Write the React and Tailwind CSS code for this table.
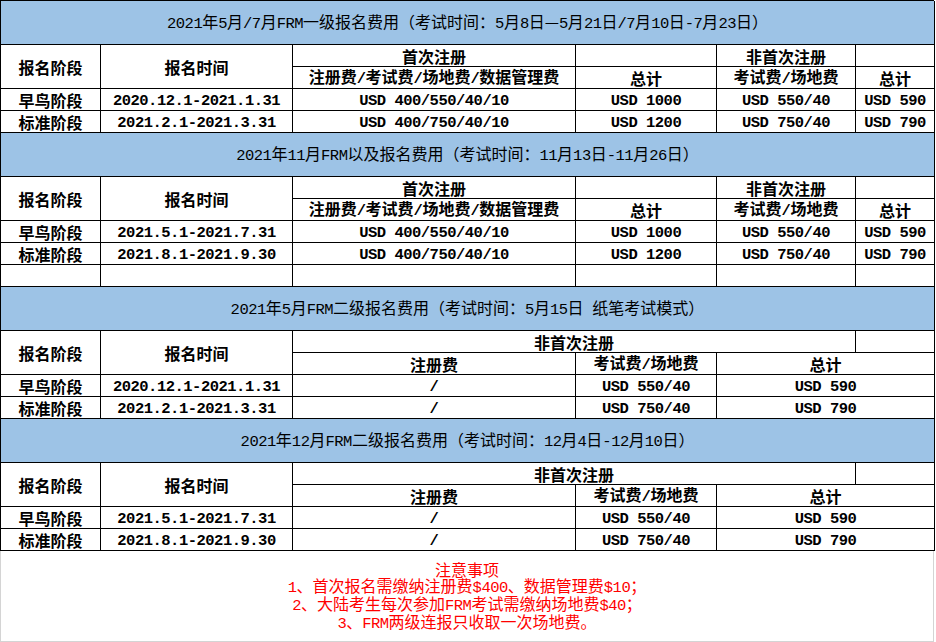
import React from "react";

function T({ children }) {
  const parts = String(children).split(/([\x00-\x7F]+)/);
  return (
    <span className="whitespace-pre">
      {parts.map((p, i) =>
        /^[\x00-\x7F]+$/.test(p) ? (
          <span key={i} className="font-['Liberation_Mono',monospace] text-[15.5px] tracking-[-0.5px]">
            {p}
          </span>
        ) : (
          <span key={i}>{p}</span>
        )
      )}
    </span>
  );
}

function C({ className = "", children }) {
  return (
    <div className={`flex items-center justify-center border-r border-b border-black leading-none whitespace-nowrap ${className}`}>
      {children != null ? <T>{children}</T> : null}
    </div>
  );
}

function Title({ children }) {
  return <C className="col-span-6 row-span-2 bg-[#9dc3e6] font-normal">{children}</C>;
}

function Level1({ title, rows, extra }) {
  return (
    <>
      <Title>{title}</Title>
      <C className="row-span-2">报名阶段</C>
      <C className="row-span-2">报名时间</C>
      <C>首次注册</C>
      <C />
      <C>非首次注册</C>
      <C />
      <C>注册费/考试费/场地费/数据管理费</C>
      <C>总计</C>
      <C>考试费/场地费</C>
      <C>总计</C>
      {rows.map((r, i) => (
        <React.Fragment key={i}>
          <C>{r[0]}</C>
          <C>{r[1]}</C>
          <C>{r[2]}</C>
          <C>{r[3]}</C>
          <C>{r[4]}</C>
          <C>{r[5]}</C>
        </React.Fragment>
      ))}
      {extra && (
        <>
          <C />
          <C />
          <C />
          <C />
          <C />
          <C />
        </>
      )}
    </>
  );
}

function Level2({ title, rows }) {
  return (
    <>
      <Title>{title}</Title>
      <C className="row-span-2">报名阶段</C>
      <C className="row-span-2">报名时间</C>
      <C className="col-span-3">非首次注册</C>
      <C />
      <C>注册费</C>
      <C>考试费/场地费</C>
      <C className="col-span-2">总计</C>
      {rows.map((r, i) => (
        <React.Fragment key={i}>
          <C>{r[0]}</C>
          <C>{r[1]}</C>
          <C>/</C>
          <C>{r[2]}</C>
          <C className="col-span-2">{r[3]}</C>
        </React.Fragment>
      ))}
    </>
  );
}

function Note({ children }) {
  return (
    <div className="h-[18px] flex items-center leading-none whitespace-nowrap">
      <T>{children}</T>
    </div>
  );
}

export default function App() {
  return (
    <div className="w-[936px] h-[642px] bg-white text-black text-[16px] font-bold font-['Noto_Sans_CJK_SC',sans-serif]">
      <div className="w-[934px] grid grid-cols-[100px_192px_283px_141px_139px_79px] auto-rows-[22px] border-l border-t border-black">
        <Level1
          title="2021年5月/7月FRM一级报名费用（考试时间：5月8日—5月21日/7月10日-7月23日）"
          rows={[
            ["早鸟阶段", "2020.12.1-2021.1.31", "USD 400/550/40/10", "USD 1000", "USD 550/40", "USD 590"],
            ["标准阶段", "2021.2.1-2021.3.31", "USD 400/750/40/10", "USD 1200", "USD 750/40", "USD 790"],
          ]}
        />
        <Level1
          title="2021年11月FRM以及报名费用（考试时间：11月13日-11月26日）"
          rows={[
            ["早鸟阶段", "2021.5.1-2021.7.31", "USD 400/550/40/10", "USD 1000", "USD 550/40", "USD 590"],
            ["标准阶段", "2021.8.1-2021.9.30", "USD 400/750/40/10", "USD 1200", "USD 750/40", "USD 790"],
          ]}
          extra
        />
        <Level2
          title="2021年5月FRM二级报名费用（考试时间：5月15日 纸笔考试模式）"
          rows={[
            ["早鸟阶段", "2020.12.1-2021.1.31", "USD 550/40", "USD 590"],
            ["标准阶段", "2021.2.1-2021.3.31", "USD 750/40", "USD 790"],
          ]}
        />
        <Level2
          title="2021年12月FRM二级报名费用（考试时间：12月4日-12月10日）"
          rows={[
            ["早鸟阶段", "2021.5.1-2021.7.31", "USD 550/40", "USD 590"],
            ["标准阶段", "2021.8.1-2021.9.30", "USD 750/40", "USD 790"],
          ]}
        />
      </div>
      <div className="w-[934px] h-[91px] border-x border-b border-[#d4d4d4] flex flex-col items-center pt-[9px] text-[#ff0000] font-normal">
        <Note>注意事项</Note>
        <Note>1、首次报名需缴纳注册费$400、数据管理费$10；</Note>
        <Note>2、大陆考生每次参加FRM考试需缴纳场地费$40；</Note>
        <Note>3、FRM两级连报只收取一次场地费。</Note>
      </div>
    </div>
  );
}
